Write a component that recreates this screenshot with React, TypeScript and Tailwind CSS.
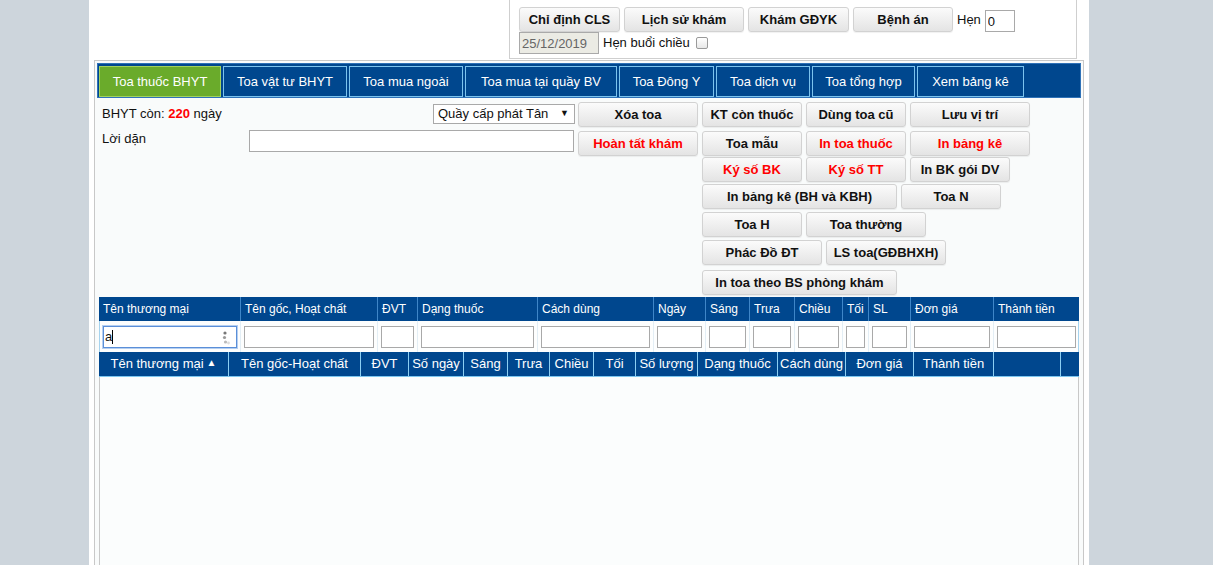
import React from "react";

// tab row data
const tabs = [
    { label: "Toa thuốc BHYT", w: "w-[122px]", active: true },
    { label: "Toa vật tư BHYT", w: "w-[124px]", active: false },
    { label: "Toa mua ngoài", w: "w-[114px]", active: false },
    { label: "Toa mua tại quầy BV", w: "w-[152px]", active: false },
    { label: "Toa Đông Y", w: "w-[95px]", active: false },
    { label: "Toa dịch vụ", w: "w-[94px]", active: false },
    { label: "Toa tổng hợp", w: "w-[103px]", active: false },
    { label: "Xem bảng kê", w: "w-[107px]", active: false },
];

// entry table columns
const entryCols = [
    { label: "Tên thương mại", w: "w-[142px]" },
    { label: "Tên gốc, Hoạt chất", w: "w-[137px]" },
    { label: "ĐVT", w: "w-[40px]" },
    { label: "Dạng thuốc", w: "w-[120px]" },
    { label: "Cách dùng", w: "w-[116px]" },
    { label: "Ngày", w: "w-[52px]" },
    { label: "Sáng", w: "w-[44px]" },
    { label: "Trưa", w: "w-[45px]" },
    { label: "Chiều", w: "w-[48px]" },
    { label: "Tối", w: "w-[26px]" },
    { label: "SL", w: "w-[42px]" },
    { label: "Đơn giá", w: "w-[83px]" },
    { label: "Thành tiền", w: "w-[85px]" },
];

// list grid columns
const listCols = [
    { label: "Tên thương mại", w: "w-[130px]" },
    { label: "Tên gốc-Hoạt chất", w: "w-[132px]" },
    { label: "ĐVT", w: "w-[48px]" },
    { label: "Số ngày", w: "w-[55px]" },
    { label: "Sáng", w: "w-[44px]" },
    { label: "Trưa", w: "w-[42px]" },
    { label: "Chiều", w: "w-[44px]" },
    { label: "Tối", w: "w-[42px]" },
    { label: "Số lượng", w: "w-[62px]" },
    { label: "Dạng thuốc", w: "w-[80px]" },
    { label: "Cách dùng", w: "w-[68px]" },
    { label: "Đơn giá", w: "w-[68px]" },
    { label: "Thành tiền", w: "w-[80px]" },
    { label: "", w: "w-[67px]" },
    { label: "", w: "w-[18px]" },
];

function Btn({ children, w, red }: { children: React.ReactNode; w: string; red?: boolean }) {
    return (
        <button
            className={`${w} h-[25px] shrink-0 rounded-[3px] border border-[#d2d2d2] bg-linear-to-b from-[#fbfbfb] to-[#e4e4e4] text-[13px] font-bold leading-none whitespace-nowrap shadow-[0_1px_1px_rgba(0,0,0,0.06)] ${red ? "text-[#ff0000]" : "text-[#111]"}`}
        >
            {children}
        </button>
    );
}

function Spinner() {
    return (
        <svg width="8" height="14" viewBox="0 0 8 14" className="absolute right-[6px] top-[4px]">
            <circle cx="3" cy="2" r="1.6" fill="#777" />
            <circle cx="2.5" cy="6.5" r="1.6" fill="#999" />
            <circle cx="3.5" cy="11" r="1.6" fill="#bbb" />
            <circle cx="6.5" cy="12" r="1.4" fill="#ddd" />
        </svg>
    );
}

export default function App() {
    return (
        <div className="w-full h-[565px] overflow-hidden bg-[#cdd5dc] font-['Liberation_Sans',Arial,sans-serif] text-[13px] text-[#111]">
            <div className="ml-[89px] w-[1000px] h-[565px] overflow-hidden bg-white">
                {/* top box */}
                <div className="ml-[420px] w-[568px] h-[59px] border-x border-b border-[#cfcfcf] pl-[9px] pt-[7px]">
                    <div className="flex items-center gap-[4px]">
                        <Btn w="w-[101px]">Chỉ định CLS</Btn>
                        <Btn w="w-[120px]">Lịch sử khám</Btn>
                        <Btn w="w-[101px]">Khám GĐYK</Btn>
                        <Btn w="w-[100px]">Bệnh án</Btn>
                        <span>Hẹn</span>
                        <input
                            defaultValue="0"
                            className="w-[30px] h-[22px] mt-[3px] border border-[#a9a9a9] bg-white px-[2px] text-[13px] outline-none"
                        />
                    </div>
                    <div className="flex items-center">
                        <input
                            defaultValue="25/12/2019"
                            disabled
                            className="w-[80px] h-[22px] border border-[#a9a9a9] bg-[#ebebe4] px-[2px] text-[13px] text-[#666] outline-none"
                        />
                        <span className="ml-[4px]">Hẹn buổi chiều</span>
                        <span className="ml-[6px] w-[12px] h-[12px] rounded-[2px] border border-[#9a9a9a] bg-linear-to-b from-white to-[#e8e8e8]" />
                    </div>
                </div>

                {/* main panel */}
                <div className="ml-[5px] mt-[1px] w-[990px] h-[520px] border border-[#c8c8c8] bg-[#f9fbfb] p-[2px]">
                    {/* tabs */}
                    <div className="h-[35px] border border-[#2f72b8] bg-[#00478e] pt-[2px] pl-[1px] flex gap-[2px]">
                        {tabs.map((t) => (
                            <div
                                key={t.label}
                                className={`${t.w} h-[31px] flex items-center justify-center text-white text-[13px] border ${t.active ? "bg-[#6aab2b] border-[#a2d15c]" : "border-[#7cc3ee]"}`}
                            >
                                {t.label}
                            </div>
                        ))}
                    </div>

                    {/* form + buttons */}
                    <div className="flex pt-[4px] pl-[5px]">
                        <div className="w-[473px]">
                            <div className="h-[24px] flex items-center justify-between">
                                <span>
                                    BHYT còn: <b className="text-[#ff0000]">220</b> ngày
                                </span>
                                <div className="w-[142px] h-[20px] border border-[#a9a9a9] bg-white flex items-center justify-between pl-[4px] pr-[5px] text-[13px]">
                                    <span>Quầy cấp phát Tân</span>
                                    <span className="text-[9px]">▼</span>
                                </div>
                            </div>
                            <div className="flex items-start mt-[3px]">
                                <span className="w-[147px]">Lời dặn</span>
                                <input className="w-[325px] h-[22px] mt-[1px] border border-[#a9a9a9] bg-white outline-none" />
                            </div>
                        </div>

                        <div className="ml-[3px] w-[452px] flex flex-col">
                            <div className="flex gap-[4px]">
                                <Btn w="w-[120px]">Xóa toa</Btn>
                                <Btn w="w-[100px]">KT còn thuốc</Btn>
                                <Btn w="w-[100px]">Dùng toa cũ</Btn>
                                <Btn w="w-[120px]">Lưu vị trí</Btn>
                            </div>
                            <div className="flex gap-[4px] mt-[4px]">
                                <Btn w="w-[120px]" red>Hoàn tất khám</Btn>
                                <Btn w="w-[100px]">Toa mẫu</Btn>
                                <Btn w="w-[100px]" red>In toa thuốc</Btn>
                                <Btn w="w-[120px]" red>In bảng kê</Btn>
                            </div>
                            <div className="flex flex-col pl-[124px] mt-[1px]">
                                <div className="flex gap-[4px]">
                                    <Btn w="w-[100px]" red>Ký số BK</Btn>
                                    <Btn w="w-[100px]" red>Ký số TT</Btn>
                                    <Btn w="w-[100px]">In BK gói DV</Btn>
                                </div>
                                <div className="flex gap-[4px] mt-[2px]">
                                    <Btn w="w-[195px]">In bảng kê (BH và KBH)</Btn>
                                    <Btn w="w-[100px]">Toa N</Btn>
                                </div>
                                <div className="flex gap-[4px] mt-[3px]">
                                    <Btn w="w-[100px]">Toa H</Btn>
                                    <Btn w="w-[120px]">Toa thường</Btn>
                                </div>
                                <div className="flex gap-[4px] mt-[3px]">
                                    <Btn w="w-[120px]">Phác Đồ ĐT</Btn>
                                    <Btn w="w-[120px]">LS toa(GĐBHXH)</Btn>
                                </div>
                                <div className="flex gap-[4px] mt-[5px]">
                                    <Btn w="w-[195px]">In toa theo BS phòng khám</Btn>
                                </div>
                            </div>
                        </div>
                    </div>

                    {/* entry table */}
                    <div className="mx-[2px] mt-[2px]">
                        <div className="flex h-[24px] bg-[#00478e] text-white text-[12px]">
                            {entryCols.map((c, i) => (
                                <div
                                    key={c.label}
                                    className={`${c.w} shrink-0 flex items-center pl-[4px] whitespace-nowrap overflow-hidden ${i < entryCols.length - 1 ? "border-r border-[#3f86c8]" : ""}`}
                                >
                                    {c.label}
                                </div>
                            ))}
                        </div>
                        <div className="flex h-[31px] bg-[#fdfefe] border-x border-[#a6d3ee]">
                            {entryCols.map((c, i) => (
                                <div
                                    key={c.label}
                                    className={`${i === 0 ? "w-[141px]" : c.w} ${i === entryCols.length - 1 ? "w-[83px]" : ""} shrink-0 flex items-center px-[3px] ${i < entryCols.length - 1 ? "border-r border-[#e3eef5]" : ""}`}
                                >
                                    {i === 0 ? (
                                        <div className="relative w-full h-[22px] border border-[#5b8fd8] shadow-[0_0_0_1px_#b5cff1] bg-white flex items-center pl-[1px] text-[13px]">
                                            a<span className="w-[1px] h-[14px] bg-black" />
                                            <Spinner />
                                        </div>
                                    ) : (
                                        <div className="w-full h-[22px] border border-[#a9a9a9] bg-white" />
                                    )}
                                </div>
                            ))}
                        </div>

                        {/* list grid */}
                        <div className="flex h-[25px] bg-[#00478e] text-white text-[13px] border-b border-[#7cc6ef]">
                            {listCols.map((c, i) => (
                                <div
                                    key={i}
                                    className={`${c.w} shrink-0 flex items-center justify-center whitespace-nowrap overflow-hidden ${i < listCols.length - 1 ? "border-r border-[#8ccff3]" : ""}`}
                                >
                                    {c.label}
                                    {i === 0 && <span className="ml-[3px] text-[10px] -mt-[4px]">▲</span>}
                                </div>
                            ))}
                        </div>
                        <div className="h-[300px] bg-[#fbfdfd] border-x border-[#c8c8c8]" />
                    </div>
                </div>
            </div>
        </div>
    );
}
